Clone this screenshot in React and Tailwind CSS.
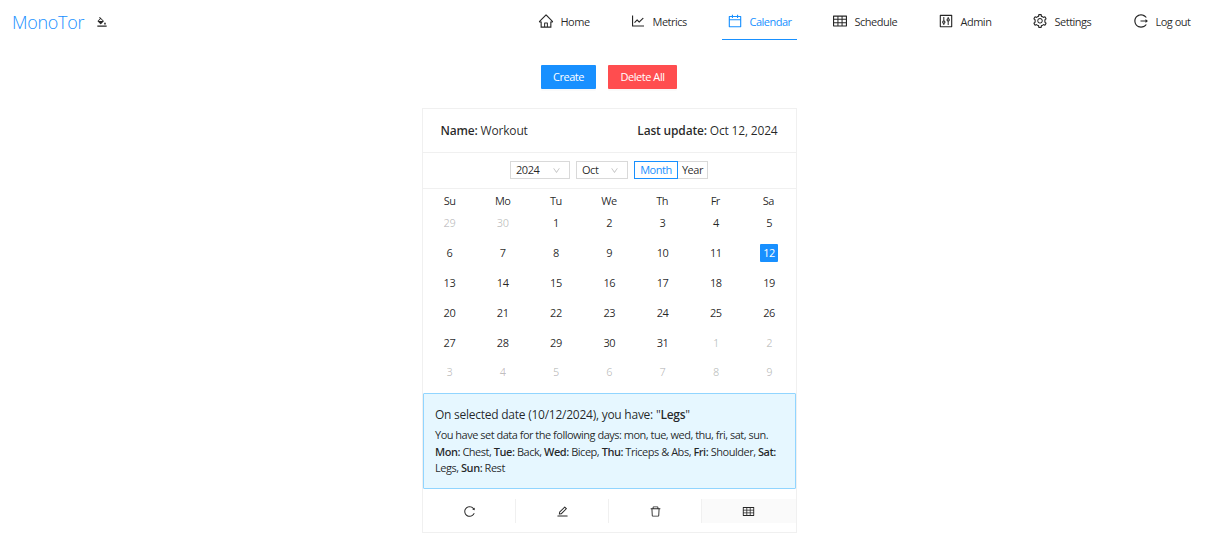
import React from 'react';
import {
  AiOutlineBgColors,
  AiOutlineHome,
  AiOutlineLineChart,
  AiOutlineCalendar,
  AiOutlineTable,
  AiOutlineControl,
  AiOutlineSetting,
  AiOutlineLogout,
  AiOutlineReload,
  AiOutlineEdit,
  AiOutlineDelete,
  AiOutlineDown,
} from 'react-icons/ai';

const navItems = [
  { label: 'Home', Icon: AiOutlineHome, width: 'w-[92px]' },
  { label: 'Metrics', Icon: AiOutlineLineChart, width: 'w-[97px]' },
  { label: 'Calendar', Icon: AiOutlineCalendar, width: 'w-[105px]', active: true },
  { label: 'Schedule', Icon: AiOutlineTable, width: 'w-[106px]' },
  { label: 'Admin', Icon: AiOutlineControl, width: 'w-[94px]' },
  { label: 'Settings', Icon: AiOutlineSetting, width: 'w-[101px]' },
  { label: 'Log out', Icon: AiOutlineLogout, width: 'w-[91px]' },
];

const weekDays = ['Su', 'Mo', 'Tu', 'We', 'Th', 'Fr', 'Sa'];

const days = Array.from({ length: 42 }, (_, i) => {
  if (i < 2) return { n: 29 + i, muted: true };
  if (i < 33) return { n: i - 1, muted: false };
  return { n: i - 32, muted: true };
});

const plan = [
  ['Mon:', 'Chest,'],
  ['Tue:', 'Back,'],
  ['Wed:', 'Bicep,'],
  ['Thu:', 'Triceps & Abs,'],
  ['Fri:', 'Shoulder,'],
  ['Sat:', 'Legs,'],
  ['Sun:', 'Rest'],
];

function Header() {
  return (
    <header className="flex h-[41px] items-start justify-between">
      <div className="flex h-11 items-center pl-3">
        <span className="w-[84px] text-[18px] tracking-[-0.3px] font-light text-[#1890ff]">MonoTor</span>
        <AiOutlineBgColors className="size-3" />
      </div>
      <nav className="flex">
        {navItems.map(({ label, Icon, width, active }) => (
          <div key={label} className={width}>
            <a
              className={`-ml-[5px] flex h-10 w-fit items-center pr-[5px] pl-[5px] pt-[3px] ${
                active ? 'border-b border-[#1890ff] text-[#1890ff]' : 'border-b border-transparent'
              }`}
            >
              <Icon className="mr-[6.5px] mb-px size-4" />
              <span className="tracking-[-0.5px]">{label}</span>
            </a>
          </div>
        ))}
      </nav>
    </header>
  );
}

function SelectBox({ value, width }) {
  return (
    <div className={`flex h-[18px] items-center justify-between border border-[#d9d9d9] pr-2 pl-[5px] ${width}`}>
      <span className="pb-px">{value}</span>
      <AiOutlineDown className="size-[9px] text-[#bfbfbf]" />
    </div>
  );
}

function Month() {
  return (
    <div className="h-[204px] pt-[3px]">
      <div className="grid h-[17px] grid-cols-7 items-center pr-px text-center">
        {weekDays.map((d) => (
          <span key={d}>{d}</span>
        ))}
      </div>
      <div className="-mt-px grid auto-rows-[29.8px] grid-cols-7">
        {days.map(({ n, muted }, i) => (
          <div key={i} className="flex items-center justify-center">
            <span
              className={`flex h-[18px] w-[18px] items-center justify-center rounded-[1px] pr-[0.5px] ${
                i === 13 ? 'bg-[#1890ff] text-white' : muted ? 'text-black/25' : ''
              }`}
            >
              {n}
            </span>
          </div>
        ))}
      </div>
    </div>
  );
}

export default function App() {
  return (
    <div className="h-[545px] overflow-hidden bg-white font-['Open_Sans',sans-serif] text-[11px] leading-[17px] tracking-[-0.45px] text-black/85">
      <Header />
      <div className="mt-6 flex justify-center gap-3 pr-[6px] text-white">
        <button className="h-6 w-[55px] rounded-[1px] bg-[#1890ff] pb-px shadow-[0_2px_0_rgba(0,0,0,0.02)]">Create</button>
        <button className="h-6 w-[69px] rounded-[1px] bg-[#ff4d4f] pb-px shadow-[0_2px_0_rgba(0,0,0,0.02)]">Delete All</button>
      </div>
      <main className="mt-[19px] ml-[422px] h-[425px] w-[375px] border border-[#f0f0f0]">
        <div className="flex h-11 items-center justify-between border-b border-[#f0f0f0] pr-[18.5px] pl-[17.5px] text-[12px] tracking-[-0.18px]">
          <span>
            <b className="font-semibold">Name:</b> Workout
          </span>
          <span>
            <b className="font-semibold">Last update:</b> Oct 12, 2024
          </span>
        </div>
        <div className="flex h-9 items-center border-b border-[#f0f0f0] pb-px pl-[87px]">
          <SelectBox value="2024" width="w-[60px]" />
          <div className="w-1.5" />
          <SelectBox value="Oct" width="w-[52px]" />
          <div className="w-1.5" />
          <div className="flex h-[18px] w-11 items-center justify-center border border-[#1890ff] pb-px text-[#1890ff]">Month</div>
          <div className="flex h-[18px] w-[30px] items-center justify-center border border-l-0 border-[#d9d9d9] pb-px">Year</div>
        </div>
        <Month />
        <section className="h-24 rounded-[1px] border border-[#91d5ff] bg-[#e6f7ff] px-[11px] pt-3">
          <p className="text-[12px] leading-[18px] tracking-[-0.25px]">
            On selected date (10/12/2024), you have: "<b className="font-semibold">Legs</b>"
          </p>
          <p className="mt-[2px] whitespace-nowrap tracking-[-0.5px]">
            You have set data for the following days: mon, tue, wed, thu, fri, sat, sun.
          </p>
          <p className="mt-px leading-[16px] tracking-[-0.47px]">
            {plan.map(([day, name]) => (
              <React.Fragment key={day}>
                <b className="font-semibold">{day}</b> {name}{' '}
              </React.Fragment>
            ))}
          </p>
        </section>
        <div className="mt-[10px] grid h-6 grid-cols-[93px_93px_93px_94px]">
          {[AiOutlineReload, AiOutlineEdit, AiOutlineDelete, AiOutlineTable].map((Icon, i) => (
            <div
              key={i}
              className={`flex items-center justify-center ${i < 3 ? 'border-r border-[#f0f0f0]' : 'bg-[#fafafa] pr-px'}`}
            >
              <Icon className="size-[13px]" />
            </div>
          ))}
        </div>
      </main>
    </div>
  );
}
